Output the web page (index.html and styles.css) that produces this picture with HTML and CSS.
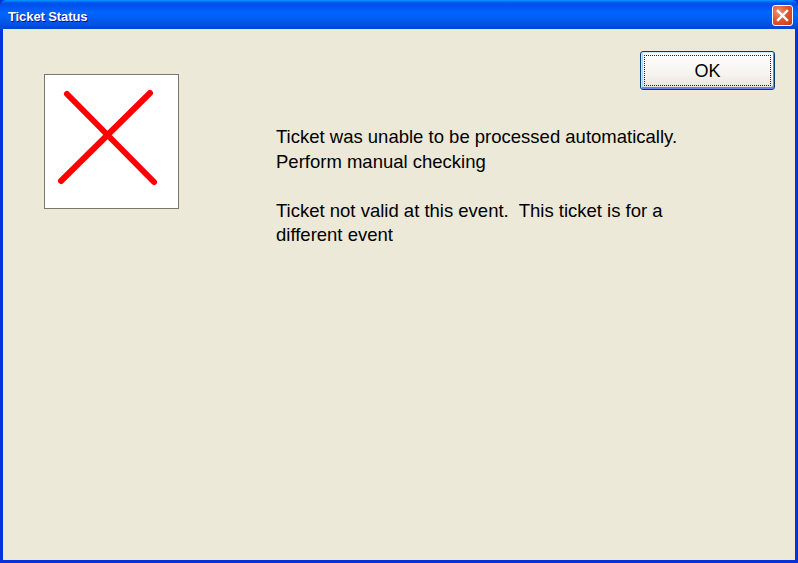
FILE: index.html
```html
<!DOCTYPE html>
<html lang="en">
<head>
    <meta charset="UTF-8">
    <meta name="viewport" content="width=device-width, initial-scale=1.0">
    <title>Ticket Status</title>
    <link rel="stylesheet" href="styles.css">
</head>
<body>
    <div class="window">
        <div class="titlebar">
            <span class="title">Ticket Status</span>
            <button class="close" aria-label="Close">
                <svg width="13" height="13" viewBox="0 0 13 13">
                    <path d="M2 2 L11 11 M11 2 L2 11" stroke="#fff" stroke-width="2.4" stroke-linecap="square"/>
                </svg>
            </button>
        </div>

        <div class="content">
            <div class="status-icon">
                <svg width="133" height="133" viewBox="0 0 133 133">
                    <path d="M22 19 L109 107 M105 18 L16 106" stroke="#ff0000" stroke-width="6" stroke-linecap="round"/>
                </svg>
            </div>

            <div class="message">
                <p>Ticket was unable to be processed automatically.  Perform manual checking</p>
                <p>Ticket not valid at this event.  This ticket is for a different event</p>
            </div>

            <button class="ok">OK</button>
        </div>
    </div>
</body>
</html>
```

FILE: styles.css
```css
body {
    margin: 0;
    font-family: "Liberation Sans", Arial, sans-serif;
    background-color: #ece9d8;
}
.window {
    height: 563px;
    display: flex;
    flex-direction: column;
    background-color: #0831d9;
    box-sizing: border-box;
}
.titlebar {
    height: 29px;
    flex-shrink: 0;
    display: flex;
    align-items: center;
    justify-content: space-between;
    padding: 3px 5px 0 8px;
    box-sizing: border-box;
    background: linear-gradient(to bottom, #0997ff 0%, #0053ee 10%, #0050ee 18%, #0066ff 45%, #0055e5 80%, #0045d0 100%);
    border-radius: 6px 6px 0 0;
}
.title {
    color: white;
    font-family: "Liberation Sans", Arial, sans-serif;
    font-weight: bold;
    font-size: 13px;
    letter-spacing: -0.1px;
    text-shadow: 1px 1px #0f1089;
}
.close {
    width: 21px;
    height: 21px;
    margin-top: -1px;
    padding: 0;
    display: flex;
    align-items: center;
    justify-content: center;
    border: 1px solid white;
    border-radius: 3px;
    background: radial-gradient(circle at 30% 30%, #f09375 0%, #e0582f 45%, #c93b16 100%);
}
.content {
    flex: 1;
    margin: 0 3px 3px 3px;
    background-color: #ece9d8;
    display: grid;
    grid-template-columns: 135px 1fr;
    align-items: start;
    padding: 22px 20px 0 41px;
}
.status-icon {
    grid-column: 1;
    grid-row: 1;
    margin-top: 23px;
    width: 133px;
    height: 133px;
    background-color: white;
    border: 1px solid #7a7868;
}
.status-icon svg {
    display: block;
}
.message {
    grid-column: 2;
    grid-row: 1;
    margin: 74px 0 0 97px;
    width: 440px;
    font-size: 18.5px;
    line-height: 24.5px;
    color: black;
}
.message p {
    margin: 0 0 24.5px 0;
    white-space: pre-wrap;
}
.ok {
    grid-column: 1 / -1;
    grid-row: 1;
    justify-self: end;
    position: relative;
    width: 135px;
    height: 39px;
    padding-top: 2px;
    font-family: "Liberation Sans", Arial, sans-serif;
    font-size: 18px;
    color: black;
    border: 1px solid #003c74;
    border-radius: 3px;
    background: linear-gradient(to bottom, #ffffff 0%, #f5f4ef 60%, #e6e3d6 100%);
    box-shadow: inset 1px 1px #cee7ff, inset -1px -2px #6982ee, inset 2px 0 #aecbf8;
}
.ok::after {
    content: "";
    position: absolute;
    top: 3px;
    left: 3px;
    right: 3px;
    bottom: 3px;
    border: 1px dotted #222;
}
```
